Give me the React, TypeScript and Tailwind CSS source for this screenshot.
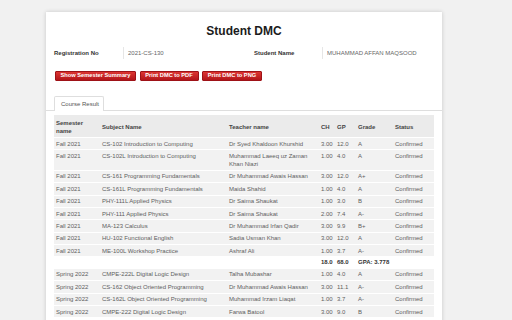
import React from 'react';

// --- datos del DMC ---
type Fila = { sem: string; subject: string; teacher: string; ch: string; gp: string; grade: string; status: string };

const fall: Fila[] = [
  { sem: 'Fall 2021', subject: 'CS-102 Introduction to Computing', teacher: 'Dr Syed Khaldoon Khurshid', ch: '3.00', gp: '12.0', grade: 'A', status: 'Confirmed' },
  { sem: 'Fall 2021', subject: 'CS-102L Introduction to Computing', teacher: 'Muhammad Laeeq uz Zaman Khan Niazi', ch: '1.00', gp: '4.0', grade: 'A', status: 'Confirmed' },
  { sem: 'Fall 2021', subject: 'CS-161 Programming Fundamentals', teacher: 'Dr Muhammad Awais Hassan', ch: '3.00', gp: '12.0', grade: 'A+', status: 'Confirmed' },
  { sem: 'Fall 2021', subject: 'CS-161L Programming Fundamentals', teacher: 'Maida Shahid', ch: '1.00', gp: '4.0', grade: 'A', status: 'Confirmed' },
  { sem: 'Fall 2021', subject: 'PHY-111L Applied Physics', teacher: 'Dr Saima Shaukat', ch: '1.00', gp: '3.0', grade: 'B', status: 'Confirmed' },
  { sem: 'Fall 2021', subject: 'PHY-111 Applied Physics', teacher: 'Dr Saima Shaukat', ch: '2.00', gp: '7.4', grade: 'A-', status: 'Confirmed' },
  { sem: 'Fall 2021', subject: 'MA-123 Calculus', teacher: 'Dr Muhammad Irfan Qadir', ch: '3.00', gp: '9.9', grade: 'B+', status: 'Confirmed' },
  { sem: 'Fall 2021', subject: 'HU-102 Functional English', teacher: 'Sadia Usman Khan', ch: '3.00', gp: '12.0', grade: 'A', status: 'Confirmed' },
  { sem: 'Fall 2021', subject: 'ME-100L Workshop Practice', teacher: 'Ashraf Ali', ch: '1.00', gp: '3.7', grade: 'A-', status: 'Confirmed' },
];

const spring: Fila[] = [
  { sem: 'Spring 2022', subject: 'CMPE-222L Digital Logic Design', teacher: 'Talha Mubashar', ch: '1.00', gp: '4.0', grade: 'A', status: 'Confirmed' },
  { sem: 'Spring 2022', subject: 'CS-162 Object Oriented Programming', teacher: 'Dr Muhammad Awais Hassan', ch: '3.00', gp: '11.1', grade: 'A-', status: 'Confirmed' },
  { sem: 'Spring 2022', subject: 'CS-162L Object Oriented Programming', teacher: 'Muhammad Irzam Liaqat', ch: '1.00', gp: '3.7', grade: 'A-', status: 'Confirmed' },
  { sem: 'Spring 2022', subject: 'CMPE-222 Digital Logic Design', teacher: 'Farwa Batool', ch: '3.00', gp: '9.0', grade: 'B', status: 'Confirmed' },
];

const td = 'pl-[2px] pr-[1px] py-[1.7px] align-top';

const Row: React.FC<{ f: Fila }> = ({ f }) => (
  <tr className="bg-[#f2f2f2] border-t border-white">
    <td className={td}>{f.sem}</td>
    <td className={td}>{f.subject}</td>
    <td className={td}>{f.teacher}</td>
    <td className={`${td} whitespace-nowrap`}>{f.ch}</td>
    <td className={`${td} whitespace-nowrap`}>{f.gp}</td>
    <td className={td}>{f.grade}</td>
    <td className={td}>{f.status}</td>
  </tr>
);

const Boton: React.FC<{ label: string; w: string }> = ({ label, w }) => (
  <button
    className={`${w} h-[10px] rounded-[1px] border border-[#9e1217] bg-gradient-to-b from-[#dc3431] to-[#b3151a] text-white text-[5.7px] font-bold leading-none flex items-center justify-center`}
  >
    {label}
  </button>
);

const th = 'pl-[2px] pr-[2px] pt-[4px] pb-[2px] align-middle font-bold';

export default function App() {
  return (
    <div className="h-screen bg-[#f1f1f1] pt-[12px] font-['Liberation_Sans',Arial,sans-serif] overflow-hidden">
      <div className="ml-[46px] w-[396px] bg-white shadow-[0_0_4px_rgba(0,0,0,0.18)] px-2 pt-[12px] pb-4">
        <h1 className="text-center text-[12px] font-bold leading-[14px] text-[#1b1b1b]">Student DMC</h1>

        {/* datos del alumno */}
        <div className="mt-[9px] flex text-[6px] leading-[12px]">
          <div className="w-[200px] flex">
            <span className="w-[69px] font-bold text-[#333]">Registration No</span>
            <span className="border-l border-[#e6e6e6] pl-[4px] text-[#666]">2021-CS-130</span>
          </div>
          <div className="flex">
            <span className="w-[68px] font-bold text-[#333]">Student Name</span>
            <span className="border-l border-[#e6e6e6] pl-[4px] text-[#666]">MUHAMMAD AFFAN MAQSOOD</span>
          </div>
        </div>

        <div className="mt-[12px] flex gap-[3.5px] ml-[1px]">
          <Boton label="Show Semester Summary" w="w-[81px]" />
          <Boton label="Print DMC to PDF" w="w-[59px]" />
          <Boton label="Print DMC to PNG" w="w-[60px]" />
        </div>

        {/* tabs */}
        <div className="-mx-2 mt-[15px] px-2 border-b border-[#dedede] flex">
          <div className="w-[50px] h-[15px] border border-b-0 border-[#dedede] rounded-t-[2px] bg-white -mb-px pl-[6px] text-[6px] leading-[15px] text-[#555]">
            Course Result
          </div>
        </div>

        <table className="mt-[4px] w-[380px] table-fixed border-collapse text-[6px] leading-[8px] text-[#5e5e5e]">
          <colgroup>
            <col className="w-[46px]" />
            <col className="w-[127px]" />
            <col className="w-[92px]" />
            <col className="w-[16px]" />
            <col className="w-[21px]" />
            <col className="w-[37px]" />
            <col className="w-[41px]" />
          </colgroup>
          <thead>
            <tr className="bg-[#ebebeb] text-left text-[#444]">
              <th className={th}>Semester name</th>
              <th className={th}>Subject Name</th>
              <th className={th}>Teacher name</th>
              <th className={th}>CH</th>
              <th className={th}>GP</th>
              <th className={th}>Grade</th>
              <th className={th}>Status</th>
            </tr>
          </thead>
          <tbody>
            {fall.map((f, i) => (
              <Row key={'f' + i} f={f} />
            ))}
            <tr className="bg-white font-bold text-[#333]">
              <td className={td}></td>
              <td className={td}></td>
              <td className={td}></td>
              <td className={`${td} whitespace-nowrap`}>18.0</td>
              <td className={`${td} whitespace-nowrap`}>68.0</td>
              <td className={`${td} whitespace-nowrap`}>GPA: 3.778</td>
              <td className={td}></td>
            </tr>
            {spring.map((f, i) => (
              <Row key={'s' + i} f={f} />
            ))}
          </tbody>
        </table>
      </div>
    </div>
  );
}
